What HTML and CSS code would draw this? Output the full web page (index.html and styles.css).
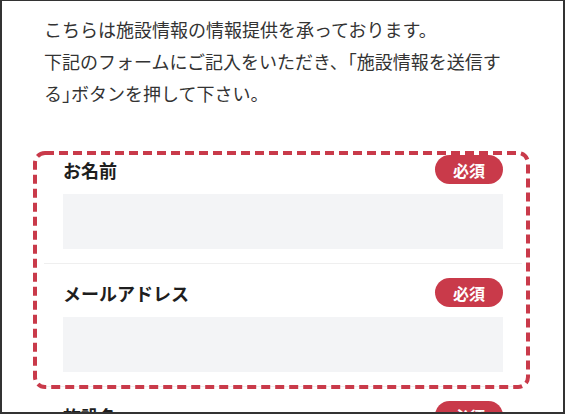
FILE: index.html
```html
<!DOCTYPE html>
<html lang="ja">
<head>
<meta charset="utf-8">
<title>施設情報の提供</title>
<link rel="stylesheet" href="styles.css">
</head>
<body>
<main class="page">
  <p class="intro">こちらは施設情報の情報提供を承っております。<br>下記のフォームにご記入をいただき、<span class="trim">「</span>施設情報を送信する<span class="trim">」</span>ボタンを押して下さい。</p>
  <form class="form">
    <div class="field">
      <div class="field-head">
        <label class="label">お名前</label>
        <span class="badge">必須</span>
      </div>
      <div class="input"></div>
    </div>
    <div class="field">
      <div class="field-head">
        <label class="label">メールアドレス</label>
        <span class="badge">必須</span>
      </div>
      <div class="input"></div>
    </div>
    <div class="field">
      <div class="field-head">
        <label class="label">施設名</label>
        <span class="badge">必須</span>
      </div>
      <div class="input"></div>
    </div>
    <svg class="highlight" width="497" height="238" viewBox="0 0 497 238" aria-hidden="true">
      <rect x="2" y="2" width="493" height="234" rx="10" ry="10" fill="none" stroke="#c93a4a" stroke-width="4" stroke-dasharray="9 5"/>
    </svg>
  </form>
</main>
</body>
</html>
```
FILE: styles.css
```css
html, body {
  margin: 0;
  padding: 0;
}

body {
  width: 565px;
  height: 414px;
  box-sizing: border-box;
  border-top: 1px solid #333;
  border-left: 2px solid #333;
  border-right: 2px solid #333;
  border-bottom: 2px solid #333;
  background: #fff;
  overflow: hidden;
  font-family: "Noto Sans CJK JP", "Noto Sans", sans-serif;
  color: #333;
}

.page {
  padding: 12px 41px 0 42px;
}

.intro {
  margin: 0 0 32px;
  padding-right: 8px;
  font-size: 18px;
  line-height: 32px;
  color: #333;
}

.trim {
  font-feature-settings: "halt";
}

.form {
  position: relative;
  margin: 0;
}

.field {
  padding: 14px 19px 14px;
  border-bottom: 1px solid #efefef;
}

.field-head {
  display: flex;
  align-items: center;
  justify-content: space-between;
  height: 29px;
}

.label {
  font-size: 18px;
  font-weight: 700;
  color: #1e1e1e;
  line-height: 1;
}

.badge {
  display: inline-flex;
  align-items: center;
  justify-content: center;
  height: 29px;
  padding: 0 18px;
  border-radius: 15px;
  background: #c93a4a;
  color: #fff;
  font-size: 16px;
  font-weight: 700;
  line-height: 1;
}

.input {
  margin-top: 10px;
  height: 55px;
  background: #f3f4f6;
}

.highlight {
  position: absolute;
  left: -11px;
  top: 10px;
  display: block;
}
```
